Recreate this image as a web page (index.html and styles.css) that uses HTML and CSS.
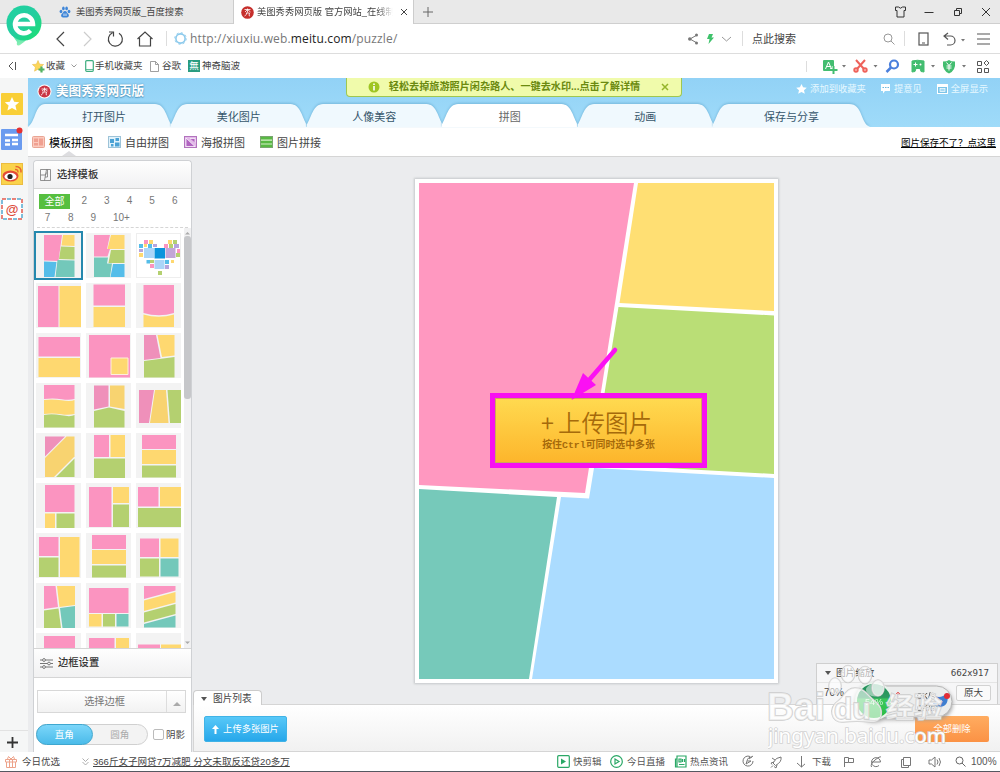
FILE: index.html
```html
<!DOCTYPE html>
<html lang="zh-CN">
<head>
    <meta charset="UTF-8">
    <title>美图秀秀网页版</title>
    <link rel="stylesheet" href="styles.css">
</head>
<body>
    <!-- browser tabs -->
    <div class="tabbar">
        <div class="tab">
            <svg class="tab-icon" width="12" height="12" viewBox="0 0 12 12"><g fill="#3f86d8"><ellipse cx="2" cy="5.5" rx="1.4" ry="1.8"/><ellipse cx="4.4" cy="2.4" rx="1.3" ry="1.9"/><ellipse cx="7.6" cy="2.4" rx="1.3" ry="1.9"/><ellipse cx="10" cy="5.5" rx="1.4" ry="1.8"/><path d="M6 5C4 5 4.500 6.500 3 7.800 1.500 9 2 11.500 4 11.500h4c2 0 2.500-2.500 1-3.700C7.500 6.500 8 5 6 5z"/></g><path d="M5 7.500v2.500M7 7.500v2.500" stroke="#fff" stroke-width=".8"/></svg>
            <span>美图秀秀网页版_百度搜索</span>
        </div>
        <div class="tab tab-active">
            <svg class="tab-icon" width="13" height="13" viewBox="0 0 13 13"><circle cx="6.500" cy="6.500" r="6.300" fill="#c62f2c"/><path d="M3.500 3.500h6M6.500 2.500v4M4 6l2.500-2.500L9.500 6M5 7h3.500L8 9.500l1 .5M5.500 7c0 1.500-.5 2.500-2 3" stroke="#fff" stroke-width=".8" fill="none"/></svg>
            <span class="tab-title">美图秀秀网页版 官方网站_在线制</span>
            <svg class="tab-close" width="8" height="8" viewBox="0 0 8 8"><path d="M1 1l6 6M7 1L1 7" stroke="#444" fill="none"/></svg>
        </div>
        <svg class="tab-new" width="12" height="12" viewBox="0 0 12 12"><path d="M6 1v10M1 6h10" stroke="#666"/></svg>
        <div class="win">
            <svg width="13" height="12" viewBox="0 0 13 12"><path d="M1.500 1H4.500l2 1.200L8.500 1h3v3.500H10v6.500H3V4.500H1.500z" fill="none" stroke="#333"/></svg>
            <svg width="12" height="12" viewBox="0 0 12 12"><path d="M1.500 6.500h9" stroke="#333"/></svg>
            <svg width="12" height="12" viewBox="0 0 12 12"><path d="M2.500 4.500h5v5h-5zM4.500 4.500v-2h5v5h-2" fill="none" stroke="#333"/></svg>
            <svg width="12" height="12" viewBox="0 0 12 12"><path d="M2 2l8 8M10 2l-8 8" stroke="#333"/></svg>
        </div>
    </div>

    <!-- address bar -->
    <div class="address">
        <svg class="nav-btns" width="106" height="20" viewBox="0 0 106 20"><g fill="none" stroke="#444" stroke-width="1.200"><path d="M11 3L4 10l7 7"/><path d="M31 3l7 7-7 7" stroke="#ccc"/><path d="M66 4.200a7 7 0 1 1-6.500-.4M56 3h4.500v4.500"/><path d="M84.500 10l7.500-7 7.500 7M86.500 9v8h11V9"/></g></svg>
        <i class="sep"></i>
        <svg class="site" width="13" height="13" viewBox="0 0 13 13"><circle cx="6.500" cy="6.500" r="4.600" fill="none" stroke="#8ac9ec" stroke-width="1.600"/><circle cx="6.500" cy="6.500" r="5.800" fill="none" stroke="#8ac9ec" stroke-dasharray="2 2.500"/></svg>
        <span class="url">http://xiuxiu.web.<b>meitu.com</b>/puzzle/</span>
        <svg class="addr-tools" width="50" height="14" viewBox="0 0 50 14"><path d="M3 7l7-4M3 7l7 4" stroke="#777"/><g fill="#777"><circle cx="2.800" cy="7" r="1.800"/><circle cx="9.500" cy="3" r="1.500"/><circle cx="9.500" cy="11" r="1.500"/></g><path d="M22 2l4 0-1.500 3.500H27L21.500 12l1-5H20z" fill="#3ec26b"/><path d="M35 5l4.500 4L44 5" fill="none" stroke="#999"/></svg>
        <i class="sep"></i>
        <span class="search">点此搜索</span>
        <svg class="glass" width="12" height="12" viewBox="0 0 12 12"><circle cx="5" cy="5" r="4" fill="none" stroke="#999"/><path d="M8 8l3.500 3.500" stroke="#999"/></svg>
        <i class="sep"></i>
        <svg class="addr-right" width="76" height="16" viewBox="0 0 76 16"><g fill="none" stroke="#555" stroke-width="1.200"><rect x="2" y="2" width="9" height="12"/><path d="M5 12h3M31 2l-4 3 4 3.500M27 5h6.500a4.500 4.500 0 0 1 0 9H30M60 3h13M60 8h13M60 13h13"/></g><path d="M44 8h4l-2 2.500z" fill="#777"/></svg>
    </div>

    <!-- bookmarks -->
    <div class="bookmarks">
        <svg class="bm-hide" width="9" height="10" viewBox="0 0 9 10"><path d="M5 1L1 5l4 4M7.500 1v8" fill="none" stroke="#555"/></svg>
        <svg class="bm-star" width="13" height="13" viewBox="0 0 13 13"><path d="M6 .5l1.600 3.700 4 .3-3 2.700.9 4L6 9.200l-3.500 2L3.400 7.200.4 4.500l4-.3z" fill="#fcd75b" stroke="#e5b23c" stroke-width=".5"/><path d="M9.500 6.500v6M6.500 9.500h6" stroke="#52b265" stroke-width="2.200"/></svg>
        <span>收藏</span>
        <svg class="bm-chev" width="6" height="4" viewBox="0 0 6 4"><path d="M.5.5L3 3 5.500.5" fill="none" stroke="#999"/></svg>
        <svg width="9" height="12" viewBox="0 0 9 12"><rect x=".7" y=".7" width="7.600" height="10.600" rx="1" fill="#fff" stroke="#3fae80" stroke-width="1.200"/><path d="M1 9.500h7" stroke="#3fae80" stroke-width=".8"/></svg>
        <span class="bm-text bm-phone">手机收藏夹</span>
        <svg width="9" height="11" viewBox="0 0 9 11"><path d="M.5.500h5l3 3v7h-8zM5.500.5v3h3" fill="none" stroke="#888" stroke-width=".8"/></svg>
        <span class="bm-google">谷歌</span>
        <span class="bm-wu">無</span>
        <span>神奇脑波</span>
        <svg class="plugins" width="191" height="18" viewBox="0 0 191 18">
            <path d="M7.500 4v11" stroke="#ddd"/>
            <rect x="24" y="3" width="11" height="11" rx="1" fill="#43bd70"/><path d="M26.500 12l3-7 3 7M27.500 9.500h4" stroke="#fff" fill="none"/><path d="M34.500 9v8M31 13h7.500" stroke="#fff" stroke-width="3.500"/><path d="M34.500 9v8M31 13h7.500" stroke="#43bd70" stroke-width="2"/>
            <g stroke="#ee625b" stroke-width="2" fill="none"><path d="M57 3l8 9M66 3l-8 9"/><circle cx="57" cy="13" r="1.700"/><circle cx="66" cy="13" r="1.700"/></g>
            <circle cx="95" cy="7.500" r="4" fill="none" stroke="#4a7fdc" stroke-width="2.200"/><path d="M92 10.500L87.500 15" stroke="#4a7fdc" stroke-width="2.500"/>
            <path d="M113 4q5-1.500 12 0v11l-3-.5-1-3h-4l-1 3-3 .5z" fill="#43bd70" stroke="#43bd70" stroke-linejoin="round"/><path d="M114.500 7.500h4M116.500 5.500v4" stroke="#fff"/><circle cx="121.500" cy="7.500" r="1" fill="#fff"/>
            <path d="M144 4.500q4 0 6-1.500 2 1.500 6 1.500 1 9-6 12-7-3-6-12z" fill="#43bd70"/><path d="M147.500 5.500l2.500 3 2.500-3M147.500 9h5M147.500 11h5M150 8.500v5" stroke="#fff" fill="none"/>
            <path d="M43 8h4l-2 2.500zM74.500 8h4l-2 2.500zM132 8h4l-2 2.500zM163 8h4l-2 2.500z" fill="#777"/>
            <path d="M178.500 4.500h4v4h-4zM178.500 11.500h4v4h-4zM185.500 11.500h4v4h-4zM187.500 3.500l2.500 2.500-2.500 2.500-2.500-2.500z" fill="none" stroke="#555"/>
        </svg>
    </div>

    <div class="main">
        <div class="side">
            <svg width="22" height="22" viewBox="0 0 22 22"><rect width="22" height="22" rx="1" fill="#f9cf37"/><path d="M11 4l2.200 4.700 5 .5-3.800 3.400 1.200 5L11 15l-4.600 2.600 1.200-5L3.800 9.200l5-.5z" fill="#fff"/></svg>
            <svg class="side-news" width="24" height="24" viewBox="0 0 24 24"><rect y="2" width="21" height="21" rx="1" fill="#6b9bef"/><path d="M4 8h13M4 13.500h5M11 13h6M4 17.500h5M11 17h6" stroke="#fff" stroke-width="2.500"/><circle cx="18.500" cy="3.500" r="3" fill="#e53030"/></svg>
            <svg width="22" height="22" viewBox="0 0 22 22"><rect x=".5" y=".5" width="21" height="21" fill="#fad34b" stroke="#ebbc40"/><ellipse cx="9.500" cy="13" rx="8" ry="5.500" fill="#e34c36"/><ellipse cx="9.500" cy="13.500" rx="6" ry="3.700" fill="#fff"/><circle cx="9" cy="13.500" r="2.600" fill="#222"/><path d="M14 6.500q3-.5 3 3M14.500 3.500q6 0 5.500 6" stroke="#e9662f" stroke-width="1.500" fill="none"/></svg>
            <svg class="side-mail" width="22" height="22" viewBox="0 0 22 22"><rect x="1" y="1" width="20" height="20" fill="#fff" stroke="#e25a4e" stroke-width="1.500" stroke-dasharray="4 6"/><rect x="1" y="1" width="20" height="20" fill="none" stroke="#55a9cf" stroke-width="1.500" stroke-dasharray="4 6" stroke-dashoffset="5"/><text x="11" y="15.500" text-anchor="middle" class="at">@</text></svg>
            <div class="side-add"><svg width="11" height="11" viewBox="0 0 11 11"><path d="M5.500 0v11M0 5.500h11" stroke="#333" stroke-width="1.800"/></svg></div>
        </div>

        <div class="app">
            <div class="header">
                <div class="brand-row">
                    <svg class="brand-logo" width="15" height="15" viewBox="0 0 15 15"><circle cx="7.500" cy="7.500" r="7" fill="#fff"/><circle cx="7.500" cy="7.500" r="6" fill="#c93645"/><path d="M4.500 5h6M7.500 3.500v4M5 7l2.500-2L10.500 7M5.500 8h4L9 10.500l1 .5M6 8c0 1.500-.5 2.500-2 3" stroke="#fff" stroke-width=".8" fill="none"/></svg>
                    <b class="brand">美图秀秀网页版</b>
                    <div class="links">
                        <svg width="11" height="10" viewBox="0 0 11 10"><path d="M5.500 0l1.600 3.300 3.700.4L8 6.200l.8 3.600-3.300-1.900-3.300 1.900L3 6.200.2 3.700l3.700-.4z" fill="#fff"/></svg>
                        <span class="link-fav">添加到收藏夹</span>
                        <svg width="11" height="10" viewBox="0 0 11 10"><path d="M1 0h9v7H5L3 9.500V7H1z" fill="#fff"/><path d="M2.500 3.500h1.500M5 3.500h1.500M7.500 3.500H9" stroke="#6db8de" stroke-width="1.200"/></svg>
                        <span class="link-tip">提意见</span>
                        <svg width="11" height="10" viewBox="0 0 11 10"><rect x=".5" y=".5" width="10" height="9" fill="#7cc4e8" stroke="#fff"/><path d="M1 2h9" stroke="#fff" stroke-width="2"/><rect x="3" y="4.500" width="5" height="3" fill="#a8daf3" stroke="#fff" stroke-width=".7"/></svg>
                        <span>全屏显示</span>
                    </div>
                </div>
                <div class="menu">
                    <div class="menu-item menu-first"><svg viewBox="0 0 143 24" preserveAspectRatio="none"><path d="M0 24C8 18 7 0 17 0H127C137 0 139 15 143 21V24z"/></svg><span>打开图片</span></div>
                    <div class="menu-item"><svg viewBox="0 0 135 24" preserveAspectRatio="none"><path d="M0 24V21C4 15 6 0 16 0H119C129 0 131 15 135 21V24z"/></svg><span>美化图片</span></div>
                    <div class="menu-item"><svg viewBox="0 0 135 24" preserveAspectRatio="none"><path d="M0 24V21C4 15 6 0 16 0H119C129 0 131 15 135 21V24z"/></svg><span>人像美容</span></div>
                    <div class="menu-item menu-on"><svg viewBox="0 0 135 24" preserveAspectRatio="none"><path d="M0 24V21C4 15 6 0 16 0H119C129 0 131 15 135 21V24z"/></svg><span>拼图</span></div>
                    <div class="menu-item"><svg viewBox="0 0 135 24" preserveAspectRatio="none"><path d="M0 24V21C4 15 6 0 16 0H119C129 0 131 15 135 21V24z"/></svg><span>动画</span></div>
                    <div class="menu-item menu-last"><svg viewBox="0 0 158 24" preserveAspectRatio="none"><path d="M0 24V21C4 15 6 0 16 0H137C151 0 148 20 158 24z"/></svg><span>保存与分享</span></div>
                </div>
                <div class="notice">
                    <svg width="12" height="12" viewBox="0 0 12 12"><circle cx="6" cy="6" r="5.500" fill="#9fc522"/><path d="M6 5v4.500M6 2.500V4" stroke="#fff" stroke-width="1.600"/></svg>
                    <b>轻松去掉旅游照片闲杂路人、一键去水印...点击了解详情</b>
                    <svg width="8" height="8" viewBox="0 0 8 8"><path d="M1 1l6 6M7 1L1 7" stroke="#95b52b" stroke-width="1.500"/></svg>
                </div>
            </div>

            <div class="subnav">
                <div class="sub sub-on"><svg width="13" height="13" viewBox="0 0 13 13"><rect x=".5" y=".5" width="12" height="11" rx="1" fill="#fbcabd" stroke="#e9a594"/><path d="M2 2.500h4v3.500H2zM7 2.500h4v7H7zM2 7h4v2.500H2z" fill="#f0a091"/></svg><span>模板拼图</span></div>
                <div class="sub"><svg width="13" height="13" viewBox="0 0 13 13"><rect x=".5" y=".5" width="12" height="11" fill="#e1f2fb" stroke="#9dc3d8"/><path d="M2 3h4v4H2zM7.500 2h3.500v3H7.500zM7 6.500h4.500v4H7zM3 8h2.500v2.500H3z" fill="#4ba2d5"/></svg><span>自由拼图</span></div>
                <div class="sub"><svg width="13" height="13" viewBox="0 0 13 13"><rect x=".5" y=".5" width="12" height="11" fill="#e2b9e8" stroke="#b273bd"/><path d="M2 2l9 8.500H2zM6 2.500h5v4" fill="#b164c1" stroke="#fff" stroke-width=".7"/></svg><span>海报拼图</span></div>
                <div class="sub"><svg width="13" height="13" viewBox="0 0 13 13"><rect x=".5" y=".5" width="12" height="11" fill="#58b943" stroke="#7aa570"/><path d="M1 4.200h11M1 8h11" stroke="#d5f0c9" stroke-width="1.200"/></svg><span>图片拼接</span></div>
                <a class="help">图片保存不了？点这里</a>
            </div>

            <div class="work">
                <div class="panel">
                    <div class="panel-head">
                        <svg width="11" height="12" viewBox="0 0 11 12"><path d="M.5.500h10v11H.5zM6.500.5L4.500 11.500M.5 6H5.500M5.500 6l1-2.500M5 8h2.500V.5" fill="none" stroke="#777" stroke-width=".8"/></svg>
                        <span>选择模板</span>
                    </div>
                    <div class="counts">
                        <span class="all">全部</span><span>2</span><span>3</span><span>4</span><span>5</span><span>6</span>
                        <span class="seven">7</span><span>8</span><span>9</span><span class="ten">10+</span>
                    </div>
                    <div class="list">
                        <div class="thumbs">
                            <svg class="thumb picked" viewBox="0 0 45 45"><path class="p" d="M8 2h18l-3.500 26L8 27.500z"/><path class="y" d="M27 2h11.500v11L25.500 12.500z"/><path class="g" d="M25 13.500l13.500.5v12.500L23 26z"/><path class="b" d="M8 28.500l12.500.5-2 15H8z"/><path class="t" d="M21.500 27l17 .5V44h-19z"/></svg>
                            <svg class="thumb" viewBox="0 0 45 45"><path class="p" d="M8 2h16l-3 14h3l-2.500 7.500H8z"/><path class="y" d="M25 2h13.500v14h-17z"/><path class="g" d="M25 17h13.500v13h-16z"/><path class="t" d="M8 24.500h14L21 30.500h5L24 44H8z"/><path class="b" d="M27 31h11.500v13H24.500z"/></svg>
                            <svg class="thumb heart" viewBox="0 0 45 45"><path fill="#abd5f8" d="M8 15h10v10H8zM18.500 27h10v9h-10z"/><path fill="#0b94dc" d="M18.500 15h10.500v10.500H18.500z"/><path fill="#c2a6d7" d="M29.500 15h10v10h-10z"/><path class="b" d="M3 11h4v4H3zM12 11h4v4h-4zM10.500 27h3.500v3.500h-3.500zM29 27h4v4h-4z"/><path class="p" d="M8 7h4v4H8zM28 11h4v4h-4zM14 31h4v4h-4zM41 16h3v4h-3z"/><path class="y" d="M13 7h4v4h-4zM8 11h3v3H8zM32 7h4v4h-4zM35 27h3v3h-3zM3 20h4v4H3z"/><path class="g" d="M37 7h4v4h-4zM33 11h4v4h-4zM14 27h4v3h-4zM22 38h4v4h-4zM40 20h4v4h-4z"/><path fill="#b6a4dd" d="M3 16h4v3H3zM17 11h4v3h-4zM38 11h5v4h-5zM29 32h4v4h-4z"/></svg>

                            <svg class="thumb" viewBox="0 0 45 45"><path class="p" d="M2 3h20.500v41H2z"/><path class="y" d="M23.500 3H45v41H23.500z"/></svg>
                            <svg class="thumb" viewBox="0 0 45 45"><path class="p" d="M7.500 1.500H39V22.500H7.500z"/><path class="y" d="M7.500 24H39v20H7.500z"/></svg>
                            <svg class="thumb" viewBox="0 0 45 45"><path class="p" d="M7.500 2H38v28q-15 4.500-30.500 0z"/><path class="y" d="M7.500 31.500q15 4.500 30.500 0V44H7.500z"/></svg>

                            <svg class="thumb" viewBox="0 0 45 45"><path class="p" d="M2.500 4H44v19.500H2.500z"/><path class="y" d="M2.500 25H44v19H2.500z"/></svg>
                            <svg class="thumb" viewBox="0 0 45 45"><path class="p" d="M3 2h41v42.500H3z"/><path class="y" stroke="#fdeedb" d="M25 25h17v16.500H25z"/></svg>
                            <svg class="thumb" viewBox="0 0 45 45"><path class="m" d="M8 2h12l4.500 23L8 27z"/><path class="y" d="M21.500 2h17v20.500L26 24z"/><path class="g" d="M8 28l30.500-4v20.500H8z"/></svg>

                            <svg class="thumb" viewBox="0 0 45 45"><path class="p" d="M8 2h30.500v14q-5 1.500-13 .2T8 16z"/><path class="y" d="M8 17q8-1 17.500.3t13-.3v14q-6 1.500-13.500.3T8 31z"/><path class="g" d="M8 32q8-1.500 17.500.3t13-.3v12.500H8z"/></svg>
                            <svg class="thumb" viewBox="0 0 45 45"><path class="m" d="M8 2.500h14.500v21L8 26.500z"/><path class="d" d="M24 2.500h14.500v23.500L24 23.500z"/><path class="g" d="M8 28l15-3.500L38.500 28v16.500H8z"/></svg>
                            <svg class="thumb" viewBox="0 0 45 45"><path class="m" d="M3 7h15l-5 33H3z"/><path class="d" d="M19 7h11l2.500 33H14z"/><path class="g" d="M31.500 7H45v33H34z"/></svg>

                            <svg class="thumb" viewBox="0 0 45 45"><path class="m" d="M9 3.500h20L9 23.500z"/><path class="d" d="M30.500 3.500H38.500v20L18 44H9V25z"/><path class="g" d="M38.500 25.500V44H20z"/></svg>
                            <svg class="thumb" viewBox="0 0 45 45"><path class="p" d="M8 2h15v22H8z"/><path class="y" d="M24.500 2H39v22H24.500z"/><path class="g" d="M8 25.500h31V45H8z"/></svg>
                            <svg class="thumb" viewBox="0 0 45 45"><path class="p" d="M6 2h34v14H6z"/><path class="y" d="M6 17h34v14H6z"/><path class="g" d="M6 32.500h34v12H6z"/></svg>

                            <svg class="thumb" viewBox="0 0 45 45"><path class="p" d="M9 2h29.500v27H9z"/><path class="y" d="M9 30.500h10V45H9z"/><path class="g" d="M20.500 30.500h18V45h-18z"/></svg>
                            <svg class="thumb" viewBox="0 0 45 45"><path class="p" d="M3 4h22.500v40H3z"/><path class="y" d="M27 4h16v16H27z"/><path class="g" d="M27 21.500h16V44H27z"/></svg>
                            <svg class="thumb" viewBox="0 0 45 45"><path class="p" d="M2 4h20.500v19.500H2z"/><path class="y" d="M24 4h21v19.500H24z"/><path class="g" d="M2 25h43v19H2z"/></svg>

                            <svg class="thumb" viewBox="0 0 45 45"><path class="p" d="M3 4h19.500v19H3z"/><path class="g" d="M3 24.500h19.500V44H3z"/><path class="y" d="M24 4h19.500v40H24z"/></svg>
                            <svg class="thumb" viewBox="0 0 45 45"><path class="p" d="M6 2h34v14H6z"/><path class="y" d="M6 17h34v14H6z"/><path class="g" d="M6 32.500h34v12H6z"/></svg>
                            <svg class="thumb" viewBox="0 0 45 45"><path class="p" d="M4 5.500h19V24H4z"/><path class="y" d="M24.500 5.500h18V24h-18z"/><path class="g" d="M4 25.500h19v18H4z"/><path class="t" d="M24.500 25.500h18v18h-18z"/></svg>

                            <svg class="thumb" viewBox="0 0 45 45"><path class="p" d="M8 3h11.500L22 24 8 26z"/><path class="y" d="M21 3h18v19l-15.500 2z"/><path class="g" d="M8 27.500l14.500-2L25 45H8z"/><path class="t" d="M24 25l15-2v22H26.500z"/></svg>
                            <svg class="thumb" viewBox="0 0 45 45"><path class="p" d="M3 5h39.500v25H3z"/><path class="y" d="M3 31h12.500v12.500H3z"/><path class="g" d="M17 31h12v12.500H17z"/><path class="t" d="M30.500 31h12v12.500h-12z"/></svg>
                            <svg class="thumb" viewBox="0 0 45 45"><path class="p" d="M8 3h31.500v4.500L8 16z"/><path class="y" d="M8 17.500L39.500 9v10.500L8 28z"/><path class="g" d="M8 29.500L39.500 21v10L8 39.500z"/><path class="t" d="M8 41l31.500-8.500v12H8z"/></svg>

                            <svg class="thumb" viewBox="0 0 45 45"><path class="p" d="M8 3h31v42H8z"/></svg>
                            <svg class="thumb" viewBox="0 0 45 45"><path class="p" d="M3 5h25.500v35H3z"/><path class="y" d="M30 5h13v35H30z"/></svg>
                            <svg class="thumb" viewBox="0 0 45 45"><path class="p" d="M2 11.500h22V40H2z"/><path class="y" d="M25 11.500h20V40H25z"/></svg>
                        </div>
                        <div class="scroll">
                            <svg width="7" height="6" viewBox="0 0 7 6"><path d="M1 4.500h5L3.500 2z" fill="#aaa"/></svg>
                            <div class="scroll-bar"></div>
                            <svg width="7" height="6" viewBox="0 0 7 6"><path d="M1 1.500h5L3.500 4z" fill="#aaa"/></svg>
                        </div>
                    </div>
                    <div class="panel-head head-border">
                        <svg width="13" height="11" viewBox="0 0 13 11"><path d="M0 2h13M0 5.500h13M0 9h13" stroke="#777"/><g fill="#fff" stroke="#777"><circle cx="4" cy="2" r="1.400"/><circle cx="9" cy="5.500" r="1.400"/><circle cx="4" cy="9" r="1.400"/></g></svg>
                        <span>边框设置</span>
                    </div>
                    <div class="border-box">
                        <div class="select"><span>选择边框</span><i><svg width="8" height="4" viewBox="0 0 8 4"><path d="M0 4l4-4 4 4z" fill="#aaa"/></svg></i></div>
                        <div class="corner">
                            <div class="toggle"><span class="toggle-on">直角</span><span>圆角</span></div>
                            <i class="check"></i>
                            <span class="shadow-label">阴影</span>
                        </div>
                    </div>
                </div>

                <div class="stage">
                    <div class="canvas">
                        <svg class="sheet" width="355" height="496" viewBox="419 183 355 496">
                            <path fill="#ff98c0" d="M419 183H634L585 493 419 485z"/>
                            <path fill="#ffdf73" d="M638 183H774V311L619.500 303z"/>
                            <path fill="#bade76" d="M618.500 307L774 315.500V474L593 464z"/>
                            <path fill="#76c9ba" d="M419 489L557 497 529 679H419z"/>
                            <path fill="#abdcff" d="M594 468L774 478V679H532L561 497 589 498.500z"/>
                        </svg>
                        <div class="upload">
                            <span class="upload-title"><i>+</i>上传图片</span>
                            <b>按住Ctrl可同时选中多张</b>
                        </div>
                        <svg class="arrow" width="50" height="56" viewBox="570 346 50 56"><path d="M615 350L590 379" stroke="#fb10f3" stroke-width="4.500" stroke-linecap="round"/><path d="M571.500 400L583 373 596 385z" fill="#fb10f3"/></svg>
                    </div>
                    <div class="bottom">
                        <div class="pic-tab"><svg width="6" height="4" viewBox="0 0 6 4"><path d="M0 0h6L3 4z" fill="#555"/></svg><span>图片列表</span></div>
                        <div class="pic-list">
                            <div class="btn btn-upload"><svg width="7" height="9" viewBox="0 0 7 9"><path d="M3.500 0L7 4H4.500v5h-2V4H0z" fill="#fff"/></svg>上传多张图片</div>
                            <div class="btn btn-clear">全部删除</div>
                        </div>
                    </div>
                    <div class="zoom-box">
                        <div class="zoom-head"><svg width="6" height="4" viewBox="0 0 6 4"><path d="M0 0h6L3 4z" fill="#555"/></svg><span>图片缩放</span><span class="size">662x917</span></div>
                        <div class="zoom-row"><span>70%</span><span class="orig">原大</span></div>
                    </div>
                </div>
            </div>
        </div>
    </div>

    <!-- browser status bar -->
    <div class="status">
        <svg class="gift" width="12" height="12" viewBox="0 0 12 12"><path d="M.5 3.500h11v2.500H.5zM1.500 6v5.500h9V6M4.500 3.500v8M7.500 3.500v8M6 3L3.500.5 2.500 3M6 3L8.500.5l1 2.500" fill="none" stroke="#eda38b"/></svg>
        <span class="today">今日优选</span>
        <svg class="dbl" width="7" height="8" viewBox="0 0 7 8"><path d="M.5.500l3 3 3-3M.5 4l3 3 3-3" fill="none" stroke="#999" stroke-width=".8"/></svg>
        <a class="news">366斤女子网贷7万减肥 分文未取反还贷20多万</a>
        <div class="status-right">
            <svg width="13" height="13" viewBox="0 0 13 13"><rect x=".7" y=".7" width="11.600" height="11.600" rx="1" fill="none" stroke="#2aa866" stroke-width="1.200"/><path d="M4 3.500l5 3-5 3z" fill="#2aa866"/></svg>
            <span class="st-cut">快剪辑</span>
            <svg width="13" height="13" viewBox="0 0 13 13"><circle cx="6.500" cy="6.500" r="5.800" fill="none" stroke="#2aa866" stroke-width="1.200"/><path d="M5 4l4 2.500L5 9z" fill="none" stroke="#2aa866" stroke-width="1.200"/></svg>
            <span class="st-live">今日直播</span>
            <svg width="13" height="13" viewBox="0 0 13 13"><path d="M3 1h9v11H1.500V4H3zM3 4v8M5 4h2v3H5zM8.500 4v3M10.500 4v3M5 9.500h5.500" fill="none" stroke="#2aa866" stroke-width="1.200"/></svg>
            <span class="st-hot">热点资讯</span>
            <svg class="st-icons" width="64" height="14" viewBox="0 0 64 14"><g fill="none" stroke="#777"><path d="M9 1.500a5 5 0 1 0 3 4.500M11 2a5 5 0 0 0-5 4l-1 3 5-3H6.500M12 1L8 4"/><path d="M40 2q-5 0-8 6l2.500 2.500Q41 7 40 2zM33 7l-3 1 1 1.500M36 10l-1 3-2-1.500M30 12.500l2-2M31 3l3 2"/><path d="M60.500 1v11M56 8l4.500 4L65 8"/></g></svg>
            <span class="st-down">下载</span>
            <svg class="st-more" width="100" height="14" viewBox="0 0 100 14"><g fill="none" stroke="#777"><path d="M3.500 12V2.500h4v5h-4M7.500 3.500h5v4h-5"/><path d="M31 7h8.500a4.500 4.500 0 1 0-1.500 3.500M30.500 12q-1.500-3 3.500-7t6-3"/><path d="M62.500 2.500h7v8h-7zM62.500 4.500h-2v8h7v-2"/><path d="M88 5h2.500L94 2v10l-3.500-3H88zM96 4.500q2 2.500 0 5M98 3q3 4 0 8"/></g></svg>
            <svg width="11" height="11" viewBox="0 0 11 11"><circle cx="4.500" cy="4.500" r="3.500" fill="none" stroke="#666"/><path d="M7 7l3.500 3.500" stroke="#666"/></svg>
            <span class="st-zoom">100%</span>
        </div>
    </div>

    <!-- things floating above the windows -->
    <svg class="browser-logo" width="38" height="46" viewBox="0 0 38 46">
        <defs>
            <linearGradient id="pin" x1="0" y1="0" x2="1" y2="1"><stop offset="0" stop-color="#1fd3a0"/><stop offset=".5" stop-color="#24cda0"/><stop offset="1" stop-color="#1be26c"/></linearGradient>
            <linearGradient id="tail" x1="0" y1="0" x2="0" y2="1"><stop offset="0" stop-color="#1dd7a6"/><stop offset="1" stop-color="#8df0b4"/></linearGradient>
        </defs>
        <path d="M3 25l9 13q-1 5 3 3l4-3 16-15z" fill="url(#tail)"/>
        <circle cx="19" cy="19" r="17.500" fill="url(#pin)"/>
        <path d="M9 20h19a9 9 0 1 0-2.500 6.500" fill="none" stroke="#fff" stroke-width="4.500"/>
    </svg>
    <div class="ball">
        <svg width="104" height="44" viewBox="0 0 104 44">
            <defs><linearGradient id="orb" x1="0" y1="0" x2="0" y2="1"><stop offset="0" stop-color="#1f8f5a"/><stop offset=".4" stop-color="#2e9b60"/><stop offset=".45" stop-color="#3bc95a"/><stop offset="1" stop-color="#29ba42"/></linearGradient></defs>
            <rect x="10" y="7" width="89" height="31" rx="15.500" fill="#eceded" stroke="#b5b5b5"/>
            <path d="M45 13v6M43 15l2-2 2 2" stroke="#e26a6a" fill="none"/><path d="M45 24v6M43 28l2 2 2-2" stroke="#43a765" fill="none"/>
            <text x="64" y="20" class="ball-text">0K/s</text><text x="64" y="32" class="ball-text">0K/s</text>
            <path d="M82 17q6 3 12-3 3 13-7 14-6 0-7-4 8 2 9-3-5 0-7-4z" fill="#3f7fd0"/><circle cx="94" cy="17" r="3" fill="#e32c35"/>
            <circle cx="21" cy="22" r="18" fill="url(#orb)" stroke="#e9f3ec" stroke-width="2"/>
            <ellipse cx="22" cy="11" rx="9" ry="6.500" fill="#fff" opacity=".5"/>
            <text x="12" y="26" class="orb-text">54%</text>
        </svg>
    </div>
    <div class="mark">
        <svg width="200" height="90" viewBox="0 0 200 90">
            <g class="mark-shape">
                <ellipse cx="67" cy="24" rx="6" ry="8"/><ellipse cx="80" cy="12" rx="6.500" ry="8.500"/><ellipse cx="97" cy="13" rx="6.500" ry="8.500"/><ellipse cx="110" cy="26" rx="6" ry="8"/>
                <text x="-1" y="58" class="mark-big" textLength="58" lengthAdjust="spacingAndGlyphs">Bai</text>
                <path d="M87 26c-9 0-11 9-17 13-10 7-7 22 5 21 9-1 19-1 28 0 12 1 14-13 4-21-7-5-10-13-20-13z"/>
                <text x="66" y="57" class="mark-du">du</text>
                <text x="118" y="56" class="mark-cn">经验</text>
            </g>
            <text x="0" y="81" class="mark-url" textLength="178" lengthAdjust="spacingAndGlyphs">jingyan.baidu.com</text>
        </svg>
    </div>
</body>
</html>
```

FILE: styles.css
```css
* {
    box-sizing: border-box;
}
body {
    margin: 0;
    width: 1000px;
    height: 772px;
    overflow: hidden;
    position: relative;
    display: flex;
    flex-direction: column;
    background: #fff;
    color: #444;
    font-family: "Liberation Sans", "Noto Sans CJK SC", sans-serif;
    font-size: 10px;
    line-height: 14px;
    white-space: nowrap;
}
svg {
    display: block;
    flex: none;
}
.at {
    font: bold 13px "Liberation Sans", sans-serif;
    fill: #dc4a3a;
}

/* browser */
.tabbar {
    flex: none;
    height: 24px;
    display: flex;
    background: #e9e9e9;
    border-bottom: 1px solid #cfcfcf;
}
.tab {
    display: flex;
    align-items: center;
    width: 233px;
    padding-left: 59px;
    font-size: 9.3px;
}
.tab-icon {
    margin-right: 5px;
}
.tab-active {
    width: 181px;
    height: 24px;
    padding-left: 7px;
    background: #fff;
    border-left: 1px solid #ccc;
    border-right: 1px solid #ccc;
}
.tab-active .tab-icon {
    margin-right: 3px;
}
.tab-title {
    width: 136px;
    -webkit-mask-image: linear-gradient(to right, #000 88%, transparent);
    mask-image: linear-gradient(to right, #000 88%, transparent);
}
.tab-close {
    margin-left: 7px;
}
.tab-new {
    margin: 6px 0 0 8px;
}
.win {
    margin-left: auto;
    padding-right: 8px;
    display: flex;
    align-items: center;
    gap: 16.5px;
}
.address {
    flex: none;
    height: 30px;
    display: flex;
    align-items: center;
    border-bottom: 1px solid #ddd;
}
.sep {
    flex: none;
    width: 1px;
    height: 15px;
    background: #ddd;
}
.nav-btns {
    margin: 0 7px 0 53px;
}
.site {
    margin: 0 3px 0 7px;
}
.url {
    flex: none;
    width: 497px;
    color: #777;
    font-family: "Open Sans", sans-serif;
    font-size: 12px;
    letter-spacing: 0.14px;
}
.url b {
    font-weight: normal;
    color: #222;
}
.addr-tools {
    margin-right: 5px;
}
.search {
    flex: none;
    width: 140px;
    padding-left: 9px;
    font-size: 11px;
}
.glass {
    margin-right: 9px;
}
.addr-right {
    margin-left: 12px;
}
.bookmarks {
    flex: none;
    height: 24px;
    display: flex;
    align-items: center;
    font-size: 9.5px;
}
.bm-hide {
    margin: 0 15px 0 8px;
}
.bm-star {
    margin-right: 1px;
}
.bm-chev {
    margin: 0 8px 0 6px;
}
.bm-phone {
    width: 56px;
    padding-left: 1px;
}
.bm-google {
    margin: 0 7px 0 3px;
}
.bm-wu {
    width: 12px;
    height: 12px;
    margin-right: 2px;
    background: #299c80;
    color: #fff;
    line-height: 12px;
    text-align: center;
}
.plugins {
    margin: 0 10px 0 auto;
}
.main {
    flex: 1;
    min-height: 0;
    display: flex;
}
.side {
    width: 28px;
    display: flex;
    flex-direction: column;
    align-items: center;
    padding: 15px 5px 0 0;
    gap: 13px;
    background: #f5f6f6;
}
.side-news {
    margin: -1px 0 -1px 2px;
}
.side-add {
    margin: auto -5px 0 -1px;
    width: 28px;
    height: 22px;
    padding: 6px 0 0 7px;
    border-top: 1px solid #e2e2e2;
}

/* page header */
.app {
    flex: 1;
    display: flex;
    flex-direction: column;
}
.header {
    height: 49px;
    position: relative;
    display: flex;
    flex-direction: column;
    justify-content: space-between;
    background: linear-gradient(#92d2f6, #9fdbf9);
}
.brand-row {
    display: flex;
    align-items: center;
    height: 26px;
    padding-left: 9px;
}
.brand {
    margin-left: 4px;
    font-size: 12.6px;
    color: #fff;
    text-shadow: 0 0 2px #4a90b8, 0 1px 1px #5b9fc6;
}
.links {
    margin: -5px 12px 0 auto;
    display: flex;
    align-items: center;
    gap: 3px;
    font-size: 9.3px;
    color: #e6f8ff;
}
.link-fav {
    margin-right: 11px;
}
.link-tip {
    margin-right: 12px;
}
.menu {
    display: flex;
    height: 23px;
}
.menu-item {
    width: 135.5px;
    display: grid;
    color: #35566b;
    font-size: 11px;
}
.menu-item svg,
.menu-item span {
    grid-area: 1 / 1;
}
.menu-item svg {
    width: 100%;
    height: 23px;
    fill: #f0f9fe;
    overflow: visible;
    filter: drop-shadow(0 -1px 1px #76b8dc);
}
.menu-item span {
    z-index: 1;
    text-align: center;
    line-height: 26px;
}
.menu-first {
    width: 143px;
}
.menu-first span {
    padding-left: 9px;
}
.menu-on svg {
    fill: #fff;
}
.menu-on span {
    color: #666;
}
.menu-last {
    width: 157px;
}
.notice {
    position: absolute;
    left: 318px;
    top: 0;
    width: 336px;
    height: 19px;
    padding: 0 12px 1px 21px;
    display: flex;
    align-items: center;
    justify-content: space-between;
    background: #f0fbab;
    border: 1px solid #9fc750;
    border-top: 0;
    border-radius: 0 0 4px 4px;
    color: #6b8a10;
    font-size: 10.15px;
}
.notice b {
    margin: 0 12px 0 0;
}
.subnav {
    height: 30px;
    display: flex;
    align-items: center;
    gap: 19px;
    padding: 2px 4px 0 4px;
    background: #fff;
    border-bottom: 1px solid #d5d5d5;
}
.sub {
    width: 57px;
    display: flex;
    align-items: center;
    gap: 4px;
    font-size: 11px;
}
.sub-on {
    color: #000;
}
.sub-on::after {
    content: "";
    position: absolute;
    left: 62px;
    top: 151px;
    border: 7px solid transparent;
    border-top: 0;
    border-bottom: 5px solid #dddde0;
}
.help {
    margin-left: auto;
    color: #000;
    font-size: 9.5px;
    text-decoration: underline;
}

/* template panel */
.work {
    flex: 1;
    min-height: 0;
    display: flex;
    padding: 3px 0 0 5px;
    background: #ebecee;
}
.panel {
    width: 159px;
    display: flex;
    flex-direction: column;
    background: #fff;
    border: 1px solid #cfd1d4;
    border-bottom: 0;
    border-radius: 4px 4px 0 0;
}
.panel-head {
    flex: none;
    height: 28px;
    display: flex;
    align-items: center;
    gap: 6px;
    padding-left: 6px;
    font-size: 10.3px;
    font-weight: 500;
    color: #333;
    background: linear-gradient(#fefefe, #f1f1f2);
    border-bottom: 1px solid #d5d5d5;
    border-radius: 4px 4px 0 0;
}
.counts {
    flex: none;
    height: 39px;
    margin: 0 3px;
    padding-top: 4px;
    display: grid;
    grid-template-columns: 36px repeat(5, 22.6px);
    grid-template-rows: 16px 18px;
    align-items: center;
    text-align: center;
    color: #777;
    border-bottom: 1px dashed #d5d5d5;
}
.counts .all {
    width: 31px;
    margin-left: 2px;
    background: #56bf40;
    color: #fff;
    line-height: 15px;
}
.counts .seven {
    margin-right: 15px;
}
.counts span:nth-child(8),
.counts span:nth-child(9) {
    margin-left: -27px;
}
.counts .ten {
    margin-left: -16px;
}
.list {
    flex: none;
    height: 420px;
    display: flex;
    overflow: hidden;
}
.thumbs {
    width: 151px;
    padding: 5px 0 0 2px;
    display: grid;
    grid-template-columns: repeat(3, 45px);
    grid-auto-rows: 45px;
    gap: 5px;
}
.thumb {
    background: #f3f3f3;
}
.picked {
    outline: 2px solid #2588ae;
    outline-offset: 0;
}
.heart {
    background: #fff;
    outline: 1px solid #eee;
    outline-offset: -1px;
}
.p { fill: #fb94c0; }
.m { fill: #ef90ba; }
.y { fill: #fed870; }
.d { fill: #f8d370; }
.g { fill: #b4d070; }
.t { fill: #73c8ba; }
.b { fill: #55bde9; }
.scroll {
    width: 7px;
    padding: 2px 0;
    display: flex;
    flex-direction: column;
    background: #f1f1f2;
}
.scroll-bar {
    height: 163px;
    margin-bottom: auto;
    background: #c6c7ca;
    border-radius: 3px;
}
.head-border {
    height: 30px;
    border-top: 1px solid #d5d5d5;
    border-radius: 0;
    gap: 5px;
}
.border-box {
    padding: 12px 3px 0;
}
.select {
    display: flex;
    width: 149px;
    height: 23px;
    border: 1px solid #d8d8d8;
    background: linear-gradient(#fff, #f2f2f2);
    color: #777;
    font-size: 10.2px;
    line-height: 21px;
}
.select span {
    flex: 1;
    padding-left: 5px;
    text-align: center;
}
.select i {
    width: 19px;
    padding: 11px 0 0 6px;
    border-left: 1px solid #ddd;
}
.corner {
    display: flex;
    align-items: center;
    margin: 11px 0 0 -1px;
}
.toggle {
    width: 112px;
    height: 21px;
    display: flex;
    border: 1px solid #d0d0d0;
    border-radius: 11px;
    background: #f3f3f3;
    color: #aaa;
    font-size: 9.5px;
    line-height: 19px;
    text-align: center;
}
.toggle span {
    flex: 1;
}
.toggle .toggle-on {
    margin: -1px 0 -1px -1px;
    color: #fff;
    border: 1px solid #3fa7cf;
    border-radius: 11px;
    background: linear-gradient(#7bd6fa, #4bbbe9);
}
.check {
    width: 11px;
    height: 11px;
    margin: 0 2px 0 5px;
    border: 1px solid #bbb;
    border-radius: 2px;
}
.shadow-label {
    font-size: 9.5px;
}

/* canvas */
.stage {
    flex: 1;
    min-width: 0;
    position: relative;
    display: flex;
    flex-direction: column;
    justify-content: space-between;
}
.canvas {
    position: relative;
    width: 363px;
    margin: 19px 0 0 223px;
    padding: 4px;
    background: #fff;
    box-shadow: 0 0 2px 1px #c5c8ca;
}
.upload {
    position: absolute;
    left: 75px;
    top: 214px;
    width: 217px;
    height: 75px;
    padding-top: 9px;
    display: flex;
    flex-direction: column;
    align-items: center;
    background: linear-gradient(#ffda50, #fdb52b);
    border: 5px solid #f810f0;
    box-shadow: inset 0 0 0 1px #cfa75a;
    color: #a66a0b;
}
.upload-title {
    margin-right: 4px;
    font-family: "Noto Sans CJK SC", sans-serif;
    font-size: 23.5px;
    font-weight: 350;
    line-height: 30px;
}
.upload-title i {
    margin-right: 4px;
    font-style: normal;
}
.upload b {
    padding-top: 2px;
    font-family: "Liberation Mono", "Noto Sans CJK SC", monospace;
    font-size: 9.9px;
}
.arrow {
    position: absolute;
    left: 155px;
    top: 167px;
}
.bottom {
    flex: none;
    height: 62px;
    padding-left: 1px;
    display: flex;
    flex-direction: column;
}
.pic-tab {
    width: 69px;
    height: 15px;
    margin-bottom: -1px;
    z-index: 1;
    display: flex;
    align-items: center;
    gap: 6px;
    padding: 1px 0 0 7px;
    background: #fff;
    border: 1px solid #ccc;
    border-bottom: 0;
    border-radius: 4px 4px 0 0;
    font-size: 9.7px;
}
.pic-list {
    flex: 1;
    display: flex;
    justify-content: space-between;
    padding: 11px 11px 0 10px;
    border: 1px solid #d5d5d5;
    border-width: 1px 0 1px 1px;
    background: linear-gradient(#fff, #f1f1f1);
}
.btn {
    display: flex;
    align-items: center;
    justify-content: center;
    gap: 4px;
    height: 26px;
    border-radius: 2px;
    color: #fff;
    font-size: 9.3px;
}
.btn-upload {
    width: 83px;
    background: linear-gradient(#58c8f8, #26a7ea);
    border: 1px solid #40b3e6;
}
.btn-clear {
    width: 74px;
    background: linear-gradient(#ffac60, #fb9245);
}
.zoom-box {
    position: absolute;
    right: 2px;
    top: 503px;
    width: 182px;
    height: 41px;
    background: #f6f6f7;
    border: 1px solid #cfcfcf;
    border-bottom: 0;
}
.zoom-head {
    display: flex;
    align-items: center;
    gap: 5px;
    height: 19px;
    padding: 0 8px 0 8px;
    border-bottom: 1px solid #e4e4e4;
}
.zoom-head span:nth-child(2) {
    font-size: 9.6px;
}
.zoom-head .size {
    margin-left: auto;
    font-family: "DejaVu Sans", sans-serif;
    font-size: 8.7px;
}
.zoom-row {
    display: flex;
    justify-content: space-between;
    align-items: center;
    padding: 2px 6px 0 7px;
}
.orig {
    width: 35px;
    height: 16px;
    border: 1px solid #d2d2d2;
    border-radius: 2px;
    background: #fafafa;
    text-align: center;
    font-size: 9.5px;
}

/* status bar */
.status {
    flex: none;
    height: 20px;
    display: flex;
    align-items: center;
    border-bottom: 1px solid #555861;
    background: #fff;
    font-size: 9.5px;
}
.gift {
    margin: 0 5px;
}
.today {
    width: 60px;
}
.news {
    margin-left: 4px;
    font-size: 9.55px;
    text-decoration: underline;
}
.status-right {
    margin-left: auto;
    padding-right: 4px;
    display: flex;
    align-items: center;
    color: #555;
}
.st-cut {
    width: 37px;
    margin-left: 3px;
}
.st-live {
    width: 47px;
    margin-left: 4px;
}
.st-hot {
    width: 51px;
    margin-left: 3px;
}
.st-down {
    margin: 0 10px 0 7px;
}
.st-more {
    margin-right: 14px;
}
.st-zoom {
    width: 25px;
    margin-left: 5px;
    font-size: 10px;
}

/* overlays */
.browser-logo {
    position: absolute;
    left: 5px;
    top: 4px;
}
.ball {
    position: absolute;
    left: 853px;
    top: 679px;
    filter: drop-shadow(0 2px 2px #999);
}
.ball-text {
    font-size: 9px;
    fill: #333;
}
.orb-text {
    font-size: 9px;
    fill: #dff5e2;
}
.mark {
    position: absolute;
    left: 768px;
    top: 662px;
}
.mark-shape {
    fill: #fff;
    fill-opacity: 0.6;
    stroke: #cdcdcd;
    stroke-width: 1.5;
    paint-order: stroke;
}
.mark-big {
    font: bold 39px "Liberation Sans", sans-serif;
}
.mark-du {
    font: bold 30px "Liberation Sans", sans-serif;
}
.mark-cn {
    font: bold 28px "Noto Sans CJK SC", sans-serif;
}
.mark-url {
    font: 19.5px "Noto Sans", sans-serif;
    fill: #fff;
    stroke: #d2d2d2;
    stroke-width: 1.6;
    paint-order: stroke;
}
```
